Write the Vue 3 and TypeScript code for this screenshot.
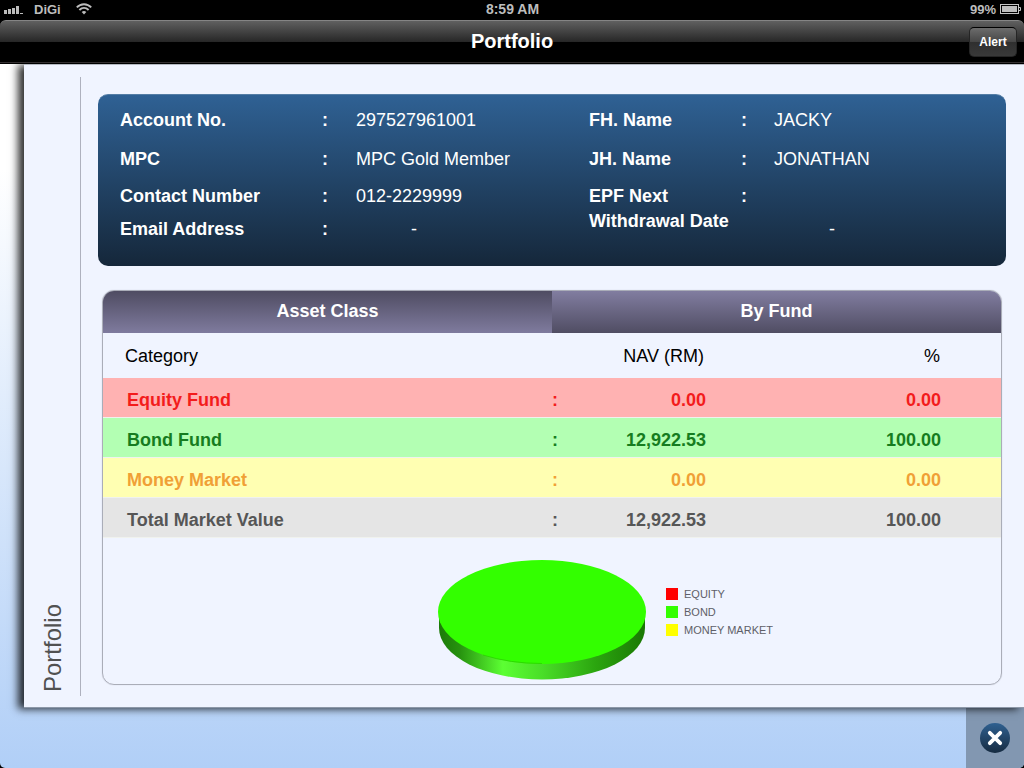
<script setup lang="ts">
import { ref } from 'vue'

interface Field {
  label: string
  value: string
  empty?: boolean
  tall?: boolean
}

interface FundRow {
  name: string
  nav: string
  percent: string
  tone: string
}

const accountFields: Field[] = [
  { label: 'Account No.', value: '297527961001' },
  { label: 'MPC', value: 'MPC Gold Member' },
  { label: 'Contact Number', value: '012-2229999' },
  { label: 'Email Address', value: '-', empty: true },
]

const holderFields: Field[] = [
  { label: 'FH. Name', value: 'JACKY' },
  { label: 'JH. Name', value: 'JONATHAN' },
  { label: 'EPF Next Withdrawal Date', value: '-', empty: true, tall: true },
]

const rows: FundRow[] = [
  { name: 'Equity Fund', nav: '0.00', percent: '0.00', tone: 'equity' },
  { name: 'Bond Fund', nav: '12,922.53', percent: '100.00', tone: 'bond' },
  { name: 'Money Market', nav: '0.00', percent: '0.00', tone: 'money' },
  { name: 'Total Market Value', nav: '12,922.53', percent: '100.00', tone: 'total' },
]

const legend = [
  { label: 'EQUITY', tone: 'equity' },
  { label: 'BOND', tone: 'bond' },
  { label: 'MONEY MARKET', tone: 'money' },
]

const tabs = ['Asset Class', 'By Fund']
const activeTab = ref('Asset Class')
</script>

<template>
  <div class="screen">
    <div class="status">
      <div class="status-left">
        <svg class="signal" width="20" height="12" viewBox="0 0 20 12" aria-hidden="true">
          <path d="M0 7h3v4H0zM4 6h3v5H4zM8 5h3v6H8zM12 3h3v8h-3zM16 10h3v1h-3z" fill="#bdbdbd" />
        </svg>
        <span class="carrier">DiGi</span>
        <svg class="wifi" width="16" height="12" viewBox="0 0 16 12" aria-hidden="true">
          <g fill="none" stroke="#bdbdbd" stroke-width="1.9">
            <path d="M.8 4.4C4.8 .1 11.2 .1 15.2 4.4" />
            <path d="M3.4 7C6.1 4.2 9.9 4.2 12.6 7" />
          </g>
          <path d="M8 11.4L5.7 9C7 7.700 9 7.700 10.300 9z" fill="#bdbdbd" />
        </svg>
      </div>
      <span class="clock">8:59 AM</span>
      <div class="status-right">
        <span>99%</span>
        <svg width="21" height="10" viewBox="0 0 21 10" aria-hidden="true">
          <rect x=".5" y=".5" width="18" height="9" fill="none" stroke="#c4c4c4" />
          <rect x="2" y="2" width="15" height="6" fill="#bdbdbd" />
          <path d="M19 3.5h1.5v3H19" fill="none" stroke="#c4c4c4" />
        </svg>
      </div>
    </div>

    <header class="navbar">
      <h1>Portfolio</h1>
      <button type="button" class="alert">Alert</button>
    </header>

    <main class="stage">
      <section class="sheet">
        <aside class="rail"><span>Portfolio</span></aside>
        <div class="content">
          <div class="account">
            <dl class="fields">
              <div v-for="f in accountFields" :key="f.label" class="field">
                <dt>{{ f.label }}</dt>
                <dd class="colon">:</dd>
                <dd :class="{ empty: f.empty }">{{ f.value }}</dd>
              </div>
            </dl>
            <dl class="fields holders">
              <div v-for="f in holderFields" :key="f.label" class="field" :class="{ tall: f.tall }">
                <dt>{{ f.label }}</dt>
                <dd class="colon">:</dd>
                <dd :class="{ empty: f.empty }">{{ f.value }}</dd>
              </div>
            </dl>
          </div>

          <div class="panel">
            <div class="tabs" role="tablist">
              <button
                v-for="t in tabs"
                :key="t"
                type="button"
                role="tab"
                :aria-selected="activeTab === t"
                :class="{ active: activeTab === t }"
                @click="activeTab = t"
              >{{ t }}</button>
            </div>
            <table>
              <colgroup>
                <col />
                <col class="c-colon" />
                <col class="c-nav" />
                <col class="c-percent" />
              </colgroup>
              <thead>
                <tr>
                  <th scope="col">Category</th>
                  <td></td>
                  <th scope="col" class="num">NAV (RM)</th>
                  <th scope="col" class="num percent">%</th>
                </tr>
              </thead>
              <tbody>
                <tr v-for="r in rows" :key="r.name" :class="r.tone">
                  <th scope="row">{{ r.name }}</th>
                  <td>:</td>
                  <td class="num">{{ r.nav }}</td>
                  <td class="num percent">{{ r.percent }}</td>
                </tr>
              </tbody>
            </table>

            <div class="chart">
              <svg width="208" height="120" viewBox="0 0 208 120" role="img" aria-label="Bond 100%">
                <defs>
                  <linearGradient id="rim" x1="0" x2="1" y1="0" y2="0">
                    <stop offset="0" stop-color="#1c7a08" />
                    <stop offset=".1" stop-color="#27920f" />
                    <stop offset=".31" stop-color="#5cff33" />
                    <stop offset=".5" stop-color="#4ade28" />
                    <stop offset=".76" stop-color="#2ba50f" />
                    <stop offset="1" stop-color="#1a7803" />
                  </linearGradient>
                </defs>
                <path d="M1 50V68A103 51.5 0 0 0 207 68V50z" fill="url(#rim)" />
                <ellipse cx="104" cy="52" rx="104" ry="52" fill="#33ff00" />
                <path d="M45 95Q72 103.500 104 103.500" fill="none" stroke="#2bd000" stroke-width=".8" />
              </svg>
              <ul class="legend">
                <li v-for="l in legend" :key="l.label"><i :class="l.tone"></i>{{ l.label }}</li>
              </ul>
            </div>
          </div>
        </div>
      </section>

      <footer class="dock">
        <button type="button" class="close" aria-label="Close">
          <svg width="30" height="30" viewBox="0 0 30 30" aria-hidden="true">
            <defs>
              <linearGradient id="disc" x1="0" x2="0" y1="0" y2="1">
                <stop offset="0" stop-color="#2f6090" />
                <stop offset="1" stop-color="#162b41" />
              </linearGradient>
            </defs>
            <circle cx="15" cy="15" r="15" fill="url(#disc)" />
            <path d="M9.800 9.800L20.200 20.200M20.200 9.800L9.800 20.200" stroke="#fff" stroke-width="3.800" stroke-linecap="round" />
          </svg>
        </button>
      </footer>
    </main>
  </div>
</template>

<style>
body {
  margin: 0;
  background: #000;
}
</style>

<style scoped>
* {
  box-sizing: border-box;
}

.screen {
  display: flex;
  flex-direction: column;
  min-height: 100vh;
  font-family: "Liberation Sans", Arial, sans-serif;
  background: #000;
}

button {
  font-family: inherit;
  border: 0;
  padding: 0;
  cursor: pointer;
}

.status {
  display: grid;
  grid-template-columns: 1fr auto 1fr;
  align-items: center;
  height: 20px;
  padding: 0 3px 2px 4px;
  color: #bdbdbd;
  font-size: 13px;
  font-weight: bold;
}

.status-left,
.status-right {
  display: flex;
  align-items: center;
}

.status-right {
  justify-content: flex-end;
  gap: 4px;
}

.carrier {
  margin: 0 15px 0 10px;
}

.clock {
  font-size: 14px;
}

.navbar {
  display: grid;
  grid-template-columns: 1fr auto 1fr;
  align-items: center;
  height: 44px;
  padding: 0 7px;
  border-top: 1px solid #858585;
  border-bottom: 1px solid #000;
  border-radius: 6px 6px 0 0;
  background: linear-gradient(#606060, #262626 50%, #000 50%);
  box-shadow: inset 0 -1px #332e30;
}

h1 {
  grid-column: 2;
  margin: 0;
  padding-bottom: 2px;
  color: #fff;
  font-size: 20px;
  line-height: 24px;
}

.alert {
  justify-self: end;
  width: 48px;
  height: 30px;
  border: 1px solid #252525;
  border-top-color: #000;
  border-radius: 5px;
  background: linear-gradient(#6c6c6c, #464646 50%, #2f2f2f 50%, #393939);
  color: #fff;
  font-size: 12px;
  font-weight: bold;
}

.stage {
  flex: 1;
  display: flex;
  flex-direction: column;
  border-radius: 0 0 5px 5px;
  background: linear-gradient(#fff, #fff 15%, #b1cff7);
  overflow: hidden;
}

.sheet {
  position: relative;
  z-index: 1;
  flex: 1;
  display: flex;
  margin-left: 24px;
  padding: 12px 18px 11px 0;
  border-top: 1px solid #b5b9c2;
  border-bottom: 1px solid #8d98a8;
  background: #f0f4ff;
  box-shadow: -6px 1px 8px rgba(0, 0, 0, 0.8);
}

.rail {
  display: flex;
  align-items: flex-end;
  justify-content: center;
  width: 57px;
  padding: 0 0 4px 2px;
  border-right: 1px solid #aeb1be;
  color: #515151;
  font-size: 24px;
  line-height: 28px;
}

.rail span {
  writing-mode: vertical-rl;
  transform: rotate(180deg);
}

.content {
  flex: 1;
  padding: 17px 0 11px;
  margin-left: 17px;
}

.account {
  display: flex;
  padding: 6px 22px 22px;
  border-top: 1px solid #547da5;
  border-radius: 10px;
  background: linear-gradient(#2f6194, #15273a);
  color: #fff;
  font-size: 18px;
  line-height: 25px;
}

.fields {
  flex: 469;
  display: grid;
  grid-template-columns: 202fr 34fr 233fr;
  grid-template-rows: 39px 38px 36px 30px;
  margin: 0;
}

.holders {
  flex: 395;
  grid-template-columns: 152fr 33fr 210fr;
}

.field {
  grid-column: 1 / -1;
  display: grid;
  grid-template-columns: subgrid;
  grid-template-rows: subgrid;
  align-items: center;
}

.tall {
  grid-row: span 2;
}

.tall dt {
  grid-row: span 2;
  align-self: start;
  padding-top: 6px;
}

.tall .empty {
  grid-row: 2;
  grid-column: 3;
}

dt,
.colon {
  font-weight: bold;
}

dd {
  margin: 0;
}

.empty {
  padding-left: 55px;
}

.panel {
  margin: 24px 4px 0;
  border: 1px solid #aaadb8;
  border-radius: 12px;
  box-shadow: 0 0 1px #b7bac5;
  overflow: hidden;
}

.tabs {
  display: flex;
}

.tabs button {
  flex: 1;
  height: 42px;
  padding-bottom: 2px;
  background: linear-gradient(#817da0, #504d63);
  color: #fff;
  font-size: 18px;
  font-weight: bold;
}

.tabs .active {
  background: linear-gradient(#4f4c62, #7f7b9e);
}

table {
  width: 100%;
  table-layout: fixed;
  border-collapse: separate;
  border-spacing: 0;
  font-size: 18px;
  line-height: 21px;
}

.c-colon {
  width: 40px;
}

.c-nav {
  width: 114px;
}

.c-percent {
  width: 295px;
}

th,
td {
  height: 40px;
  padding: 5px 0 0;
  border-bottom: 1px solid #f0f2ee;
  text-align: left;
  font-weight: bold;
}

th:first-child {
  padding-left: 24px;
}

thead th,
thead td {
  height: 45px;
  padding: 2px 2px 0 0;
  border: 0;
  color: #000;
  font-weight: normal;
}

thead th:first-child {
  padding-left: 22px;
}

.num {
  text-align: right;
  white-space: nowrap;
}

.percent {
  padding-right: 60px;
}

thead .percent {
  padding-right: 61px;
}

tr.equity {
  background: #ffb2b2;
  color: #f31c1c;
}

tr.bond {
  background: #b3ffb3;
  color: #167c20;
}

tr.money {
  background: #ffffb2;
  color: #f0a036;
}

tr.total {
  background: #e5e5e5;
  color: #565656;
}

.chart {
  display: flex;
  align-items: flex-start;
  justify-content: center;
  gap: 20px;
  padding: 22px 0 4px;
}

.chart > svg {
  margin-left: 212px;
}

.legend {
  width: 212px;
  margin: 25px 0 0;
  padding: 0;
  list-style: none;
  color: #5f5f68;
  font-size: 11px;
  line-height: 18px;
}

.legend li {
  display: flex;
  align-items: center;
  gap: 6px;
}

.legend i {
  width: 12px;
  height: 12px;
}

i.equity {
  background: #f00;
}

i.bond {
  background: #3f0;
}

i.money {
  background: #ff0;
}

.dock {
  display: flex;
  justify-content: flex-end;
  height: 60px;
}

.close {
  display: grid;
  place-items: center;
  width: 58px;
  background: #8297b1;
}
</style>
